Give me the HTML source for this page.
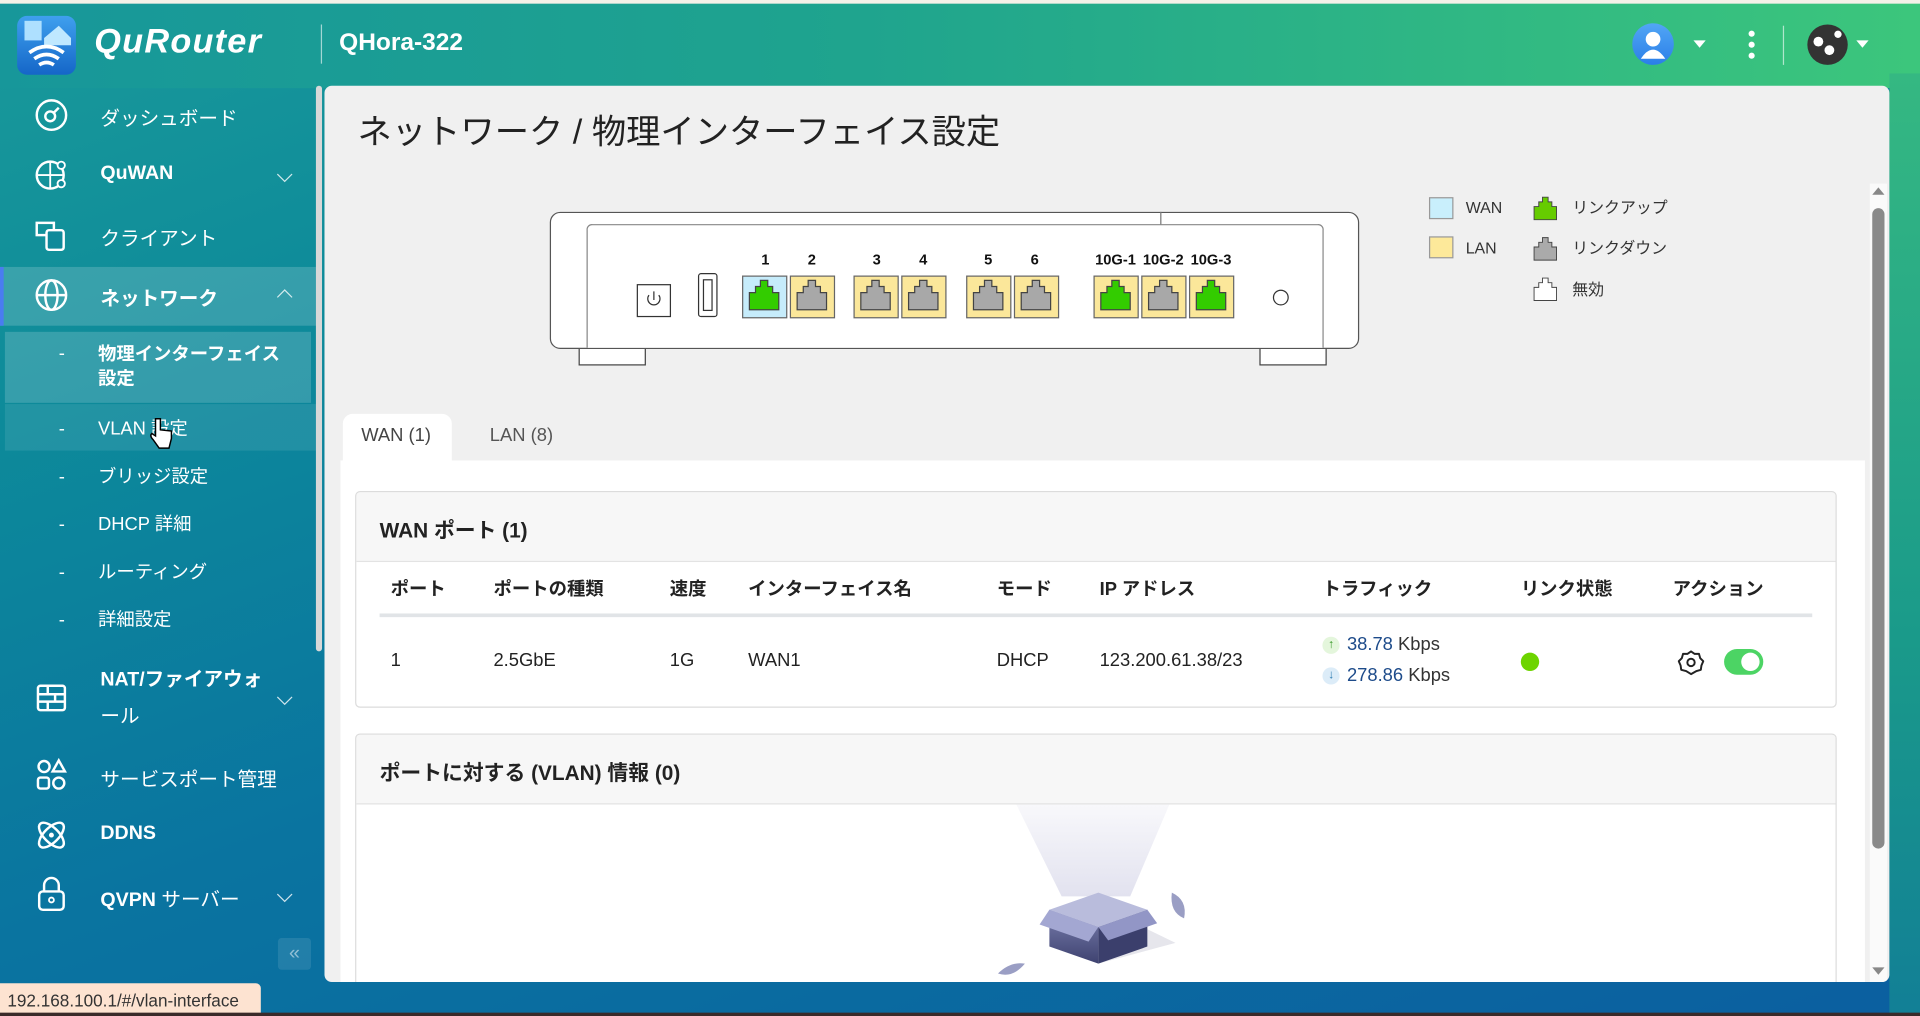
<!DOCTYPE html>
<html><head><meta charset="utf-8">
<style>
*{box-sizing:border-box;margin:0;padding:0}
html,body{width:1920px;height:1016px;overflow:hidden;background:#0b5f8f}
body{font-family:"Liberation Sans","Noto Sans CJK JP",sans-serif}
#w{position:absolute;left:0;top:0;width:1568px;height:830px;transform:scale(1.22449);transform-origin:0 0;
background:linear-gradient(160deg,#1a9a9a 0%,#0d8a9a 25%,#0a74a0 55%,#0b5fa0 100%);overflow:hidden}
#topbar{position:absolute;left:0;top:0;width:1568px;height:72px;background:linear-gradient(90deg,#17979a 0%,#1fa48e 45%,#3cc67c 100%)}
#topline{position:absolute;left:0;top:0;width:1568px;height:3px;background:#f4f1e8}
#rightedge{position:absolute;left:1543px;top:60px;width:25px;height:770px;background:linear-gradient(180deg,#35b882,#1a9a8a 60%,#127f96)}
.abs{position:absolute}
.nav{position:absolute;left:82px;color:#fff;font-size:16px;white-space:nowrap}
.navb{font-weight:bold}
.ico{position:absolute;left:28px}
.sub{position:absolute;left:48px;color:#fff;font-size:15px;white-space:nowrap}
.chev{position:absolute;left:228px;width:9px;height:9px;border-right:1.5px solid rgba(255,255,255,.8);border-bottom:1.5px solid rgba(255,255,255,.8)}
#main{position:absolute;left:265px;top:70px;width:1278px;height:732px;background:#f0f0f0;border-radius:6px;overflow:hidden}
.th{position:absolute;top:400px;font-size:15px;font-weight:bold;color:#222;white-space:nowrap}
.td{position:absolute;top:461px;font-size:15px;color:#222;white-space:nowrap}
</style></head><body>
<div id="w">
<div id="topbar"></div>
<div id="topline"></div>
<div id="rightedge"></div>

<div class="abs" style="left:14px;top:13px;width:48px;height:48px;border-radius:8px;background:linear-gradient(180deg,#3fa0ee,#1566c8);overflow:hidden">
<svg width="48" height="48" viewBox="0 0 48 48"><rect x="6" y="4" width="14" height="16" fill="#aee0ff"/><path d="M22 18 L34 8 L44 18 V24 H22Z" fill="#bfe8ff"/><path d="M10 30 Q24 20 38 30" stroke="#fff" stroke-width="3" fill="none"/><path d="M14 35 Q24 28 34 35" stroke="#fff" stroke-width="3" fill="none"/><path d="M18 40 Q24 36 30 40" stroke="#fff" stroke-width="3" fill="none"/></svg></div>
<div class="abs" style="left:77px;top:18px;color:#fff;font-size:28px;font-weight:bold;font-style:italic;letter-spacing:1px">QuRouter</div>
<div class="abs" style="left:262px;top:20px;width:1px;height:32px;background:rgba(255,255,255,.6)"></div>
<div class="abs" style="left:277px;top:24px;color:#fff;font-size:20px;font-weight:bold">QHora-322</div>

<div class="abs" style="left:1333px;top:19px;width:34px;height:34px;border-radius:50%;background:linear-gradient(180deg,#52a6f5,#2a7fe8)">
<svg width="34" height="34"><circle cx="17" cy="13" r="6" fill="#fff"/><path d="M7 29 Q17 14 27 29Z" fill="#fff"/></svg></div>
<div class="abs" style="left:1383px;top:33px;border-left:5px solid transparent;border-right:5px solid transparent;border-top:6px solid #fff"></div>
<div class="abs" style="left:1428px;top:25px;width:5px;height:5px;border-radius:50%;background:#fff;box-shadow:0 9px 0 #fff,0 18px 0 #fff"></div>
<div class="abs" style="left:1456px;top:21px;width:1px;height:32px;background:rgba(255,255,255,.6)"></div>
<div class="abs" style="left:1476px;top:20px;width:33px;height:33px;border-radius:50%;background:#333">
<svg width="33" height="33"><circle cx="9" cy="14" r="4" fill="#fff"/><circle cx="18" cy="21" r="4" fill="#fff"/><circle cx="25" cy="8" r="3" fill="#fff"/></svg></div>
<div class="abs" style="left:1516px;top:33px;border-left:5px solid transparent;border-right:5px solid transparent;border-top:6px solid #fff"></div>

<div class="abs" style="left:0;top:218px;width:258px;height:48px;background:rgba(255,255,255,.17)"></div>
<div class="abs" style="left:0;top:218px;width:3px;height:48px;background:#4a7cf0"></div>
<div class="abs" style="left:4px;top:271px;width:250px;height:58px;background:rgba(255,255,255,.17)"></div>
<div class="abs" style="left:4px;top:330px;width:254px;height:38px;background:rgba(255,255,255,.09)"></div>
<div class="abs" style="left:258px;top:70px;width:5px;height:462px;background:#d8d8d8;border-radius:3px"></div>

<svg class="ico" style="top:80px" width="28" height="28"><circle cx="14" cy="14" r="12" stroke="#fff" stroke-width="2" fill="none"/><circle cx="13" cy="15" r="4" stroke="#fff" stroke-width="2" fill="none"/><path d="M16 12 L20 8" stroke="#fff" stroke-width="2"/></svg>
<div class="nav" style="top:83px">ダッシュボード</div>
<svg class="ico" style="top:129px" width="28" height="28"><circle cx="13" cy="14" r="11" stroke="#fff" stroke-width="2" fill="none"/><path d="M13 3 V25 M3 14 H23" stroke="#fff" stroke-width="1.5"/><circle cx="22" cy="6" r="3" fill="#0f8a9a" stroke="#fff" stroke-width="1.5"/><circle cx="22" cy="21" r="3" fill="#0f8a9a" stroke="#fff" stroke-width="1.5"/></svg>
<div class="nav navb" style="top:133px">QuWAN</div><div class="chev" style="top:138px;transform:rotate(45deg)"></div>
<svg class="ico" style="top:178px" width="28" height="28"><rect x="2" y="4" width="14" height="10" stroke="#fff" stroke-width="2" fill="none"/><rect x="10" y="10" width="14" height="16" rx="2" stroke="#fff" stroke-width="2" fill="#0f8a9a"/></svg>
<div class="nav" style="top:181px">クライアント</div>
<svg class="ico" style="top:227px" width="28" height="28"><circle cx="14" cy="14" r="12" stroke="#fff" stroke-width="2" fill="none"/><ellipse cx="14" cy="14" rx="5" ry="12" stroke="#fff" stroke-width="2" fill="none"/><path d="M2 14 H26" stroke="#fff" stroke-width="2"/></svg>
<div class="nav navb" style="top:230px">ネットワーク</div><div class="chev" style="top:238px;transform:rotate(-135deg)"></div>

<div class="sub" style="top:280px">-</div>
<div class="abs" style="left:80px;top:280px;color:#fff;font-size:15px;font-weight:bold;line-height:20px">物理インターフェイス<br>設定</div>
<div class="sub" style="top:339px"><span style="display:inline-block;width:32px">-</span>VLAN 設定</div>
<div class="sub" style="top:378px"><span style="display:inline-block;width:32px">-</span>ブリッジ設定</div>
<div class="sub" style="top:417px"><span style="display:inline-block;width:32px">-</span>DHCP 詳細</div>
<div class="sub" style="top:456px"><span style="display:inline-block;width:32px">-</span>ルーティング</div>
<div class="sub" style="top:495px"><span style="display:inline-block;width:32px">-</span>詳細設定</div>
<svg class="abs" style="left:122px;top:340px" width="20" height="28"><path d="M5 2 V16 L2 14 Q0 16 3 19 L8 26 H16 L18 18 V12 L9 11 V2Z" fill="#fff" stroke="#000" stroke-width="1.2"/></svg>

<svg class="ico" style="top:556px" width="28" height="28"><rect x="3" y="4" width="22" height="20" rx="2" stroke="#fff" stroke-width="2" fill="none"/><path d="M3 11 H25 M3 17 H25 M11 4 V11 M17 11 V17 M11 17 V24" stroke="#fff" stroke-width="2"/></svg>
<div class="abs" style="left:82px;top:541px;color:#fff;font-size:16px;font-weight:bold;line-height:30px">NAT/ファイアウォ<br><span style="font-weight:normal">ール</span></div>
<div class="chev" style="top:565px;transform:rotate(45deg)"></div>
<svg class="ico" style="top:619px" width="28" height="28"><circle cx="8" cy="7" r="4.5" stroke="#fff" stroke-width="2" fill="none"/><path d="M20 2 L25 11 H15Z" stroke="#fff" stroke-width="2" fill="none"/><rect x="3" y="16" width="9" height="9" rx="2" stroke="#fff" stroke-width="2" fill="none"/><circle cx="20" cy="20.5" r="4.5" stroke="#fff" stroke-width="2" fill="none"/></svg>
<div class="nav" style="top:623px">サービスポート管理</div>
<svg class="ico" style="top:668px" width="28" height="28"><ellipse cx="14" cy="14" rx="13" ry="6" transform="rotate(45 14 14)" stroke="#fff" stroke-width="2" fill="none"/><ellipse cx="14" cy="14" rx="13" ry="6" transform="rotate(-45 14 14)" stroke="#fff" stroke-width="2" fill="none"/><circle cx="14" cy="14" r="2" fill="#fff"/></svg>
<div class="nav navb" style="top:672px">DDNS</div>
<svg class="ico" style="top:715px" width="28" height="30"><path d="M8 13 V8 A6 6 0 0 1 20 8 V13" stroke="#fff" stroke-width="2" fill="none"/><rect x="4" y="13" width="20" height="15" rx="3" stroke="#fff" stroke-width="2" fill="none"/><circle cx="14" cy="20" r="2" stroke="#fff" stroke-width="1.5" fill="none"/></svg>
<div class="nav" style="top:721px"><b>QVPN</b> サーバー</div><div class="chev" style="top:726px;transform:rotate(45deg)"></div>
<div class="abs" style="left:227px;top:766px;width:27px;height:26px;border-radius:3px;background:rgba(255,255,255,.1);color:rgba(255,255,255,.5);font-size:16px;text-align:center;line-height:26px">«</div>
<div class="abs" style="left:0;top:803px;width:213px;height:27px;background:#fde3d1;border-top-right-radius:4px;font-size:14px;color:#333;padding:6px 0 0 6px">192.168.100.1/#/vlan-interface</div>

<div id="main">
<div class="abs" style="left:27px;top:16px;font-size:28px;color:#222">ネットワーク / 物理インターフェイス設定</div>
<svg class="abs" style="left:0;top:0" width="1278" height="732">
<defs><symbol id="j" viewBox="0 0 36 34"><path d="M6 28 V14 H11 V9 H15 V4 H21 V9 H25 V14 H30 V28Z" stroke="#444" stroke-width="1"/></symbol></defs>
<g transform="translate(-265,-70)">
<rect x="473" y="283" width="54" height="15" fill="#fff" stroke="#444"/>
<rect x="1029" y="283" width="54" height="15" fill="#fff" stroke="#444"/>
<rect x="449.5" y="173.5" width="660" height="111" rx="8" fill="#fff" stroke="#555"/>
<line x1="948" y1="173" x2="948" y2="184" stroke="#777"/>
<path d="M479.5 284 V188 A4 4 0 0 1 484 183.5 H1076 A4 4 0 0 1 1080.5 188 V284" fill="#fff" stroke="#888"/>
<rect x="520.5" y="232.5" width="27" height="26" fill="#fff" stroke="#333"/>
<path d="M530 241 A5 5 0 1 0 538 241 M534 238 V245" stroke="#333" fill="none"/>
<rect x="570.5" y="223.5" width="15" height="35" rx="2" fill="#fff" stroke="#333"/><rect x="574.5" y="228.5" width="7" height="25" fill="#fff" stroke="#333"/>
<g font-family="Liberation Sans,sans-serif" font-size="12" font-weight="bold" text-anchor="middle" fill="#111">
<text x="625" y="216">1</text><text x="663" y="216">2</text><text x="716" y="216">3</text><text x="754" y="216">4</text><text x="807" y="216">5</text><text x="845" y="216">6</text><text x="911" y="216">10G-1</text><text x="950" y="216">10G-2</text><text x="989" y="216">10G-3</text></g>
<rect x="606.5" y="225.5" width="36" height="34" fill="#c6ecfb" stroke="#666"/><use href="#j" x="606" y="225" width="36" height="34" fill="#33cc00"/>
<rect x="645.5" y="225.5" width="36" height="34" fill="#fbe79a" stroke="#666"/><use href="#j" x="645" y="225" width="36" height="34" fill="#a8a8a8"/>
<rect x="697.5" y="225.5" width="36" height="34" fill="#fbe79a" stroke="#666"/><use href="#j" x="697" y="225" width="36" height="34" fill="#a8a8a8"/>
<rect x="736.5" y="225.5" width="36" height="34" fill="#fbe79a" stroke="#666"/><use href="#j" x="736" y="225" width="36" height="34" fill="#a8a8a8"/>
<rect x="789.5" y="225.5" width="36" height="34" fill="#fbe79a" stroke="#666"/><use href="#j" x="789" y="225" width="36" height="34" fill="#a8a8a8"/>
<rect x="828.5" y="225.5" width="36" height="34" fill="#fbe79a" stroke="#666"/><use href="#j" x="828" y="225" width="36" height="34" fill="#a8a8a8"/>
<rect x="893.5" y="225.5" width="36" height="34" fill="#fbe79a" stroke="#666"/><use href="#j" x="893" y="225" width="36" height="34" fill="#33cc00"/>
<rect x="932.5" y="225.5" width="36" height="34" fill="#fbe79a" stroke="#666"/><use href="#j" x="932" y="225" width="36" height="34" fill="#a8a8a8"/>
<rect x="971.5" y="225.5" width="36" height="34" fill="#fbe79a" stroke="#666"/><use href="#j" x="971" y="225" width="36" height="34" fill="#33cc00"/>
<circle cx="1046" cy="243" r="6" fill="#fff" stroke="#333"/>
<rect x="1167.5" y="161.5" width="19" height="17" fill="#c9effc" stroke="#999"/>
<rect x="1167.5" y="193.5" width="19" height="17" fill="#fde99a" stroke="#999"/>
<use href="#j" x="1248" y="158" width="28" height="26" fill="#66cc00"/>
<use href="#j" x="1248" y="191" width="28" height="26" fill="#aaa"/>
<use href="#j" x="1248" y="224" width="28" height="26" fill="#fff"/>
<g font-family="Liberation Sans,Noto Sans CJK JP,sans-serif" font-size="13" fill="#333">
<text x="1197" y="174">WAN</text><text x="1197" y="207">LAN</text><text x="1284" y="174">リンクアップ</text><text x="1284" y="207">リンクダウン</text><text x="1284" y="241">無効</text></g>
</g></svg>

<div class="abs" style="left:1262px;top:80px;width:14px;height:652px;background:#fafafa"></div>
<div class="abs" style="left:1264px;top:83px;border-left:5px solid transparent;border-right:5px solid transparent;border-bottom:6px solid #888"></div>
<div class="abs" style="left:1264px;top:100px;width:10px;height:523px;background:#8a8a8a;border-radius:5px"></div>
<div class="abs" style="left:1264px;top:720px;border-left:5px solid transparent;border-right:5px solid transparent;border-top:6px solid #888"></div>

<div class="abs" style="left:15px;top:268px;width:89px;height:40px;background:#fff;border-radius:8px 8px 0 0"></div>
<div class="abs" style="left:30px;top:277px;font-size:15px;color:#444">WAN (1)</div>
<div class="abs" style="left:135px;top:277px;font-size:15px;color:#555">LAN (8)</div>
<div class="abs" style="left:13px;top:306px;width:1245px;height:426px;background:#fff"></div>

<div class="abs" style="left:25px;top:331px;width:1210px;height:177px;border:1px solid #dcdcdc;border-radius:4px;background:#fff;overflow:hidden">
<div style="height:57px;background:#f7f7f7;border-bottom:1px solid #e3e3e3;padding:17px 0 0 19px;font-size:17px;font-weight:bold;color:#222">WAN ポート (1)</div>
</div>
<div class="th" style="left:54px">ポート</div><div class="th" style="left:138px">ポートの種類</div><div class="th" style="left:282px">速度</div><div class="th" style="left:346px">インターフェイス名</div><div class="th" style="left:549px">モード</div><div class="th" style="left:633px">IP アドレス</div><div class="th" style="left:815px">トラフィック</div><div class="th" style="left:977px">リンク状態</div><div class="th" style="left:1101px">アクション</div>
<div class="abs" style="left:45px;top:431px;width:1170px;height:3px;background:#e1e4e7"></div>
<div class="td" style="left:54px">1</div><div class="td" style="left:138px">2.5GbE</div><div class="td" style="left:282px">1G</div><div class="td" style="left:346px">WAN1</div><div class="td" style="left:549px">DHCP</div><div class="td" style="left:633px">123.200.61.38/23</div>
<div class="abs" style="left:815px;top:450px;width:14px;height:14px;border-radius:50%;background:#e4f6dc;color:#3a9a2a;font-size:10px;text-align:center;line-height:14px">↑</div>
<div class="abs" style="left:835px;top:448px;font-size:15px;color:#333"><span style="color:#1d4b8a">38.78</span> Kbps</div>
<div class="abs" style="left:815px;top:475px;width:14px;height:14px;border-radius:50%;background:#dcecf8;color:#2a7ab0;font-size:10px;text-align:center;line-height:14px">↓</div>
<div class="abs" style="left:835px;top:473px;font-size:15px;color:#333"><span style="color:#1d4b8a">278.86</span> Kbps</div>
<div class="abs" style="left:977px;top:463px;width:15px;height:15px;border-radius:50%;background:#6dd400"></div>
<svg class="abs" style="left:1105px;top:460px" width="22" height="22"><path d="M11 2 L14 4 L17.5 4 L18.5 7.5 L21 10 L19.5 13.5 L19 17 L15.5 18 L11 20.5 L7 18 L3 17 L2.5 13.5 L1 10 L3.5 7.5 L4.5 4 L8 4Z" stroke="#222" stroke-width="1.6" fill="none" stroke-linejoin="round"/><circle cx="11" cy="11" r="3" stroke="#222" stroke-width="1.6" fill="none"/></svg>
<div class="abs" style="left:1143px;top:460px;width:32px;height:21px;border-radius:11px;background:#4cd464"><div style="position:absolute;right:3px;top:3px;width:15px;height:15px;border-radius:50%;background:#fff"></div></div>

<div class="abs" style="left:25px;top:529px;width:1210px;height:220px;border:1px solid #dcdcdc;border-radius:4px;background:#fff;overflow:hidden">
<div style="height:57px;background:#f7f7f7;border-bottom:1px solid #e3e3e3;padding:17px 0 0 19px;font-size:17px;font-weight:bold;color:#222">ポートに対する (VLAN) 情報 (0)</div>
</div>
<svg class="abs" style="left:540px;top:587px" width="180" height="150">
<defs><linearGradient id="beam" x1="0" y1="0" x2="0" y2="1"><stop offset="0" stop-color="#f8f8fb"/><stop offset="1" stop-color="#e2e2ef"/></linearGradient>
<linearGradient id="bx" x1="0" y1="0" x2="0" y2="1"><stop offset="0" stop-color="#7a7fae"/><stop offset="1" stop-color="#3e4270"/></linearGradient></defs>
<path d="M25 0 H150 L118 75 H62Z" fill="url(#beam)"/>
<path d="M92 130 L155 113 L124 98Z" fill="#e6e6ec"/>
<path d="M52 86 L92 100 L92 130 L52 116Z" fill="url(#bx)"/>
<path d="M92 100 L132 86 L132 116 L92 130Z" fill="#3b3f6c"/>
<path d="M52 86 L92 72 L132 86 L92 100Z" fill="#b9bcdc"/>
<path d="M52 86 L44 98 L84 112 L92 100Z" fill="#a3a7d2"/>
<path d="M132 86 L140 97 L100 111 L92 100Z" fill="#9296c6"/>
<path d="M152 72 Q165 78 162 93 Q150 88 152 72Z" fill="#9a9ec4"/>
<path d="M10 138 Q20 128 32 130 Q22 142 10 138Z" fill="#9a9ec4"/>
</svg>
</div>
<div class="abs" style="left:0;top:827px;width:1568px;height:3px;background:#3a2a2a"></div>
</div>
</body></html>
